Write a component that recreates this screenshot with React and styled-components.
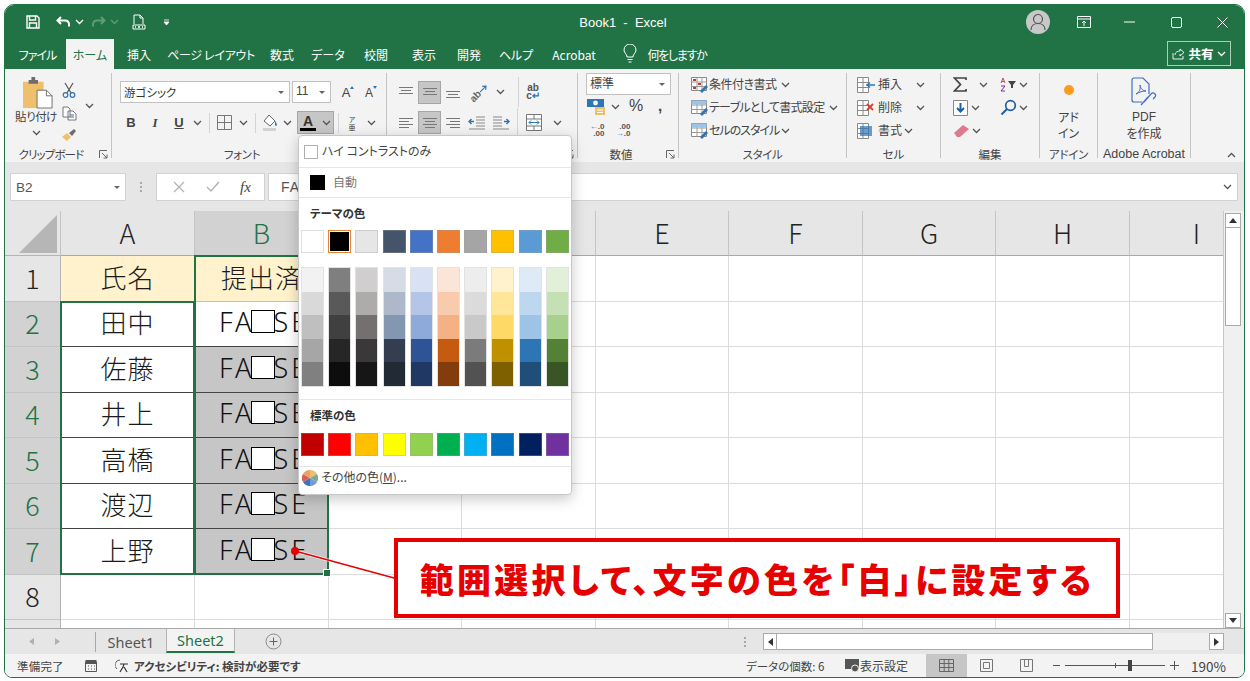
import React from 'react';
import styled, {createGlobalStyle} from 'styled-components';

const GlobalStyle = createGlobalStyle`
    html, body {
        margin: 0;
        background: #ffffff;
    }
    body {
        font-family: "Noto Sans CJK JP", "Liberation Sans", sans-serif;
        font-feature-settings: "palt";
        color: #444444;
    }
`;

const Page = styled.div`
    width: 1250px;
    height: 681px;
    padding: 4px 5px 4px 4px;
    box-sizing: border-box;
    overflow: hidden;
`;

const Window = styled.div`
    position: relative;
    height: 672px;
    display: flex;
    flex-direction: column;
    border: 1px solid #217346;
    border-radius: 10px 10px 8px 8px;
    overflow: hidden;
    background: #f3f3f3;
`;

/* title bar */
const TitleBar = styled.header`
    height: 32px;
    flex: none;
    box-sizing: border-box;
    padding-top: 2px;
    display: flex;
    align-items: center;
    background: #217346;
    color: #ffffff;
`;

const TitleSpacer = styled.div`
    width: ${p => p.$w}px;
    height: ${p => (p.$h ? `${p.$h}px` : 'auto')};
    flex: none;
`;

const TitleText = styled.div`
    width: 100px;
    flex: none;
    text-align: center;
    font-family: "Liberation Sans", sans-serif;
    font-size: 13px;
    white-space: pre;
`;

const Tool = styled.span`
    display: inline-flex;
    align-items: center;
    justify-content: center;
    flex: none;
    width: ${p => p.$w}px;
    height: ${p => (p.$h ? `${p.$h}px` : '100%')};
`;

const Avatar = styled.span`
    width: 24px;
    height: 24px;
    border-radius: 50%;
    background: #c8c8c8;
    display: inline-flex;
    align-items: center;
    justify-content: center;
`;

/* tabs */
const TabBar = styled.nav`
    height: 32px;
    flex: none;
    display: flex;
    align-items: flex-end;
    background: #217346;
`;

const TabItem = styled.span`
    flex: none;
    width: ${p => p.$w}px;
    height: 30px;
    line-height: 31px;
    text-align: center;
    font-size: 12px;
    white-space: nowrap;
    color: ${p => (p.$active ? '#217346' : '#ffffff')};
    background: ${p => (p.$active ? '#f3f3f3' : 'transparent')};
    letter-spacing: ${p => p.$ls || 0}px;
`;

const ShareButton = styled.span`
    width: 62px;
    height: 23px;
    margin: 0 13px 3px auto;
    border: 1px solid #a9cdb9;
    display: flex;
    align-items: center;
    justify-content: center;
    gap: 3px;
    color: #ffffff;
    font-size: 12.5px;
    font-weight: 700;
`;

/* ribbon */
const Ribbon = styled.section`
    height: 93px;
    flex: none;
    display: flex;
    padding-top: 4px;
    box-sizing: border-box;
    background: #f3f3f3;
`;

const Group = styled.div`
    width: ${p => p.$w}px;
    height: 85px;
    flex: none;
    box-sizing: border-box;
    border-right: 1px solid #c4c4c4;
    display: flex;
    flex-direction: column;
`;

const GroupBody = styled.div`
    height: 74px;
    flex: none;
    display: flex;
    flex-direction: ${p => p.$dir || 'column'};
    padding-left: ${p => p.$pl || 0}px;
    padding-top: ${p => p.$pt || 0}px;
    box-sizing: border-box;
`;

const Foot = styled.div`
    height: 14px;
    display: flex;
    align-items: center;
`;

const FootLabel = styled.span`
    flex: 1;
    text-align: center;
    font-size: ${p => p.$size || 11.5}px;
    line-height: 14px;
    color: #444444;
    white-space: nowrap;
    letter-spacing: ${p => p.$ls || 0}px;
    font-family: ${p => (p.$latin ? '"Liberation Sans", sans-serif' : 'inherit')};
`;

const Launcher = styled.span`
    width: 12px;
    height: 14px;
    flex: none;
    display: inline-flex;
    align-items: center;
    justify-content: center;
    margin-right: 2px;
`;

const ToolRow = styled.div`
    height: ${p => p.$h || 23}px;
    flex: none;
    display: flex;
    align-items: center;
    margin-top: ${p => p.$mt || 0}px;
    padding-left: ${p => p.$pl || 0}px;
    font-size: 12.5px;
`;

const Column = styled.div`
    width: ${p => p.$w}px;
    flex: none;
    display: flex;
    flex-direction: column;
    align-items: center;
    padding-top: ${p => p.$pt || 0}px;
    box-sizing: border-box;
`;

const Label = styled.span`
    font-size: ${p => p.$size || 12}px;
    letter-spacing: ${p => p.$ls || 0}px;
    line-height: ${p => p.$lh || 16}px;
    white-space: nowrap;
    color: #444444;
    text-align: center;
    margin-left: ${p => p.$ml || 0}px;
    margin-bottom: 2px;
    font-family: ${p => (p.$latin ? '"Liberation Sans", sans-serif' : 'inherit')};
`;

const ComboBox = styled.span`
    width: ${p => p.$w}px;
    height: ${p => p.$h || 22}px;
    flex: none;
    box-sizing: border-box;
    margin-right: ${p => p.$mr || 0}px;
    background: #ffffff;
    border: 1px solid #c2c2c2;
    display: flex;
    align-items: center;
    justify-content: space-between;
    padding: 0 5px 0 3px;
    font-size: 11.5px;
    color: #333333;
`;

const Caret = styled.span`
    width: 0;
    height: 0;
    border-left: 3px solid transparent;
    border-right: 3px solid transparent;
    border-top: 3px solid #666666;
`;

const LetterTool = styled(Tool)`
    font-family: ${p => (p.$serif ? '"Liberation Serif", serif' : '"Liberation Sans", sans-serif')};
    font-weight: 700;
    font-style: ${p => (p.$italic ? 'italic' : 'normal')};
    text-decoration: ${p => (p.$under ? 'underline' : 'none')};
    color: #444444;
    font-size: 13px;
`;

const GrowA = styled(Tool)`
    font-family: "Liberation Sans", sans-serif;
    font-size: ${p => p.$size || 13}px;
    color: #444444;
    align-items: flex-end;
    padding-bottom: 3px;
    box-sizing: border-box;
    &::after {
        content: "";
        width: 0;
        height: 0;
        margin: 0 -5px 11px 0;
        border-left: 2.5px solid transparent;
        border-right: 2.5px solid transparent;
        border-${p => (p.$down ? 'top' : 'bottom')}: 3px solid #2e75b5;
    }
`;

const Divider = styled(Tool)`
    &::after {
        content: "";
        width: 1px;
        height: ${p => p.$line || 20}px;
        background: #d4d4d4;
    }
`;

const ActiveBox = styled(Tool)`
    height: 23px;
    background: #c6c6c6;
    border: 1px solid #a6a6a6;
    box-sizing: border-box;
`;

const FontColorGlyph = styled.span`
    display: inline-block;
    border-bottom: 3px solid #000000;
    line-height: 13px;
    width: 16px;
    text-align: center;
    font-family: "Liberation Sans", sans-serif;
    font-weight: 700;
    font-size: 14px;
    color: #333333;
`;

const PhoneticGlyph = styled.span`
    font-size: 7px;
    line-height: 8px;
    text-align: center;
    color: #444444;
    display: inline-block;
`;

const OrientGlyph = styled.span`
    display: inline-flex;
    align-items: center;
    font-family: "Liberation Sans", sans-serif;
    font-size: 10px;
    font-weight: 700;
    color: #666666;
    transform: rotate(-45deg);
`;

const WrapGlyph = styled.span`
    font-family: "Liberation Sans", sans-serif;
    font-size: 10px;
    line-height: 8.5px;
    font-weight: 700;
    color: #555555;
    display: inline-block;
    text-align: center;
`;

const TinyStack = styled.span`
    font-family: "Liberation Sans", sans-serif;
    font-size: 8px;
    line-height: 7.5px;
    font-weight: 700;
    color: #555555;
    display: inline-block;
    text-align: ${p => p.$align || 'center'};
`;

const BlueText = styled.b`
    color: #2e75b5;
`;

const BigLabel = styled.span`
    font-size: 12px;
    line-height: 16px;
    text-align: center;
    color: #444444;
    font-family: ${p => (p.$latin ? '"Liberation Sans", sans-serif' : 'inherit')};
`;

const Collapse = styled.span`
    margin-left: auto;
    margin-right: 8px;
    align-self: flex-end;
    margin-bottom: 4px;
    display: inline-flex;
`;

const PasteWrap = styled.span`
    margin-left: 4px;
    display: inline-flex;
`;

/* formula bar */
const FormulaStrip = styled.div`
    height: 49px;
    flex: none;
    box-sizing: border-box;
    padding: 11px 6px 10px 5px;
    display: flex;
    align-items: stretch;
    background: #e6e6e6;
`;

const NameBox = styled.div`
    width: 116px;
    flex: none;
    box-sizing: border-box;
    background: #ffffff;
    border: 1px solid #d2d2d2;
    display: flex;
    align-items: center;
    justify-content: space-between;
    padding: 0 5px;
    font-family: "Liberation Sans", sans-serif;
    font-size: 13.5px;
    color: #555555;
`;

const GripDots = styled.span`
    width: 30px;
    flex: none;
    display: flex;
    align-items: center;
    justify-content: center;
`;

const Dots = styled.span`
    width: 2px;
    height: 10px;
    background: repeating-linear-gradient(#a8a8a8 0 2px, transparent 2px 4px);
`;

const FxBox = styled.div`
    width: 109px;
    flex: none;
    box-sizing: border-box;
    background: #ffffff;
    border: 1px solid #d2d2d2;
    display: flex;
    align-items: center;
    justify-content: space-around;
    padding: 0 3px 0 6px;
    margin-right: 3px;
`;

const FxGlyph = styled.i`
    font-family: "Liberation Serif", serif;
    font-size: 15px;
    color: #444444;
`;

const FormulaInput = styled.div`
    flex: 1;
    background: #ffffff;
    border: 1px solid #d2d2d2;
    display: flex;
    align-items: center;
    justify-content: space-between;
    padding: 0 5px 0 12px;
    font-family: "Liberation Sans", sans-serif;
    font-size: 14px;
    letter-spacing: 1px;
    color: #555555;
`;

/* sheet */
const SheetArea = styled.div`
    height: 417px;
    flex: none;
    display: flex;
    background: #ffffff;
`;

const SheetGrid = styled.div`
    position: relative;
    width: 1219px;
    height: 417px;
    flex: none;
    box-sizing: border-box;
    border-right: 1px solid #c8c8c8;
    overflow: hidden;
    display: grid;
    grid-template-columns: 56px 134px 134px 133px 134px 133px 134px 133px 134px 134px;
    grid-template-rows: 45px;
    grid-auto-rows: 45.5px;
    font-size: 26px;
`;

const Corner = styled.div`
    background: #e6e6e6;
    border-right: 1px solid #c4c4c4;
    border-bottom: 1px solid #b4b4b4;
    box-sizing: border-box;
    position: relative;
    &::after {
        content: "";
        position: absolute;
        right: 3px;
        bottom: 2px;
        width: 38px;
        height: 38px;
        background: #b6b6b6;
        clip-path: polygon(100% 0, 100% 100%, 0 100%);
    }
`;

const ColHead = styled.div`
    box-sizing: border-box;
    display: flex;
    align-items: center;
    justify-content: center;
    padding-bottom: 2px;
    background: ${p => (p.$selected ? '#d2d2d2' : '#e6e6e6')};
    color: ${p => (p.$selected ? '#217346' : '#222222')};
    border-right: 1px solid #c4c4c4;
    border-bottom: 1px solid ${p => (p.$selected ? '#217346' : '#a8a8a8')};
    font-size: 27px;
    font-weight: 300;
`;

const RowHead = styled.div`
    box-sizing: border-box;
    display: flex;
    align-items: center;
    justify-content: center;
    padding-bottom: 2px;
    background: ${p => (p.$selected ? '#d2d2d2' : '#e6e6e6')};
    color: ${p => (p.$selected ? '#217346' : '#222222')};
    border-right: 1px solid #b4b4b4;
    border-bottom: 1px solid #c4c4c4;
    font-size: 27px;
    font-weight: 300;
`;

const Cell = styled.div`
    box-sizing: border-box;
    display: flex;
    align-items: center;
    justify-content: center;
    padding-bottom: 4px;
    color: #1a1a1a;
    font-size: 26px;
    font-feature-settings: normal;
    letter-spacing: 1px;
    font-weight: 300;
    white-space: nowrap;
    overflow: hidden;
    background: ${p => p.$bg || '#ffffff'};
    border-right: 1px solid ${p => p.$line || '#dcdcdc'};
    border-bottom: 1px solid ${p => p.$line || '#dcdcdc'};
`;

const FalseText = styled.span`
    display: inline-flex;
    align-items: center;
    margin-left: 5px;
    font-family: "Noto Sans", sans-serif;
    font-size: 27px;
    font-weight: 300;
    letter-spacing: 3px;
    color: #111111;
`;

const CoverBox = styled.span`
    width: 24px;
    height: 23px;
    flex: none;
    box-sizing: border-box;
    margin-left: -3px;
    margin-right: -2px;
    background: #ffffff;
    border: 1.5px solid #000000;
`;

const Selection = styled.div`
    position: absolute;
    left: ${p => p.$left}px;
    top: ${p => p.$top}px;
    width: ${p => p.$width}px;
    height: ${p => p.$height}px;
    box-sizing: border-box;
    border: 2px solid #217346;
    pointer-events: none;
`;

const FillHandle = styled.span`
    position: absolute;
    right: -4px;
    bottom: -4px;
    width: 6px;
    height: 6px;
    background: #217346;
    border: 1px solid #ffffff;
`;

const VScroll = styled.aside`
    width: 20px;
    flex: none;
    box-sizing: border-box;
    padding: 2px 3px 0 1px;
    background: #f0f0f0;
    display: flex;
    flex-direction: column;
`;

const ScrollButton = styled.span`
    height: ${p => p.$h || 15}px;
    width: ${p => (p.$w ? `${p.$w}px` : 'auto')};
    flex: none;
    box-sizing: border-box;
    background: #ffffff;
    border: 1px solid #aaaaaa;
    display: flex;
    align-items: center;
    justify-content: center;
`;

const ScrollThumb = styled.span`
    height: 98px;
    flex: none;
    box-sizing: border-box;
    background: #ffffff;
    border: 1px solid #aaaaaa;
    border-top: none;
`;

const ScrollGap = styled.span`
    flex: 1;
`;

/* sheet tabs */
const SheetTabs = styled.div`
    height: 26px;
    flex: none;
    display: flex;
    align-items: stretch;
    background: #e6e6e6;
    border-top: 1px solid #a8a8a8;
    box-sizing: border-box;
    font-family: "Noto Sans", "Liberation Sans", sans-serif;
    font-size: 14.5px;
`;

const SheetTab = styled.span`
    flex: none;
    width: ${p => p.$w}px;
    display: flex;
    align-items: center;
    justify-content: center;
    color: ${p => (p.$active ? '#217346' : '#555555')};
    background: ${p => (p.$active ? '#f3f3f3' : 'transparent')};
    border-bottom: ${p => (p.$active ? '2px solid #217346' : 'none')};
    border-left: ${p => (p.$active ? '1px solid #b4b4b4' : 'none')};
    border-right: ${p => (p.$active ? '1px solid #b4b4b4' : 'none')};
    height: ${p => (p.$active ? '24px' : 'auto')};
    box-sizing: border-box;
`;

const VLine = styled.span`
    width: 1px;
    height: 20px;
    align-self: center;
    background: #a8a8a8;
    flex: none;
`;

const HScrollArea = styled.div`
    width: 461px;
    flex: none;
    height: 17px;
    align-self: center;
    box-sizing: border-box;
    display: flex;
    background: #f0f0f0;
`;

const HThumb = styled.span`
    width: 376px;
    flex: none;
    background: #ffffff;
    border: 1px solid #aaaaaa;
    border-left: none;
    box-sizing: border-box;
`;

const HTrack = styled.span`
    flex: 1;
`;

/* status bar */
const StatusBar = styled.footer`
    flex: 1;
    display: flex;
    align-items: center;
    background: #f3f3f3;
    font-size: 11.5px;
    color: #444444;
`;

const StatusText = styled.span`
    flex: none;
    width: ${p => p.$w}px;
    margin-left: ${p => p.$ml || 0}px;
    font-weight: ${p => (p.$bold ? 700 : 400)};
    white-space: nowrap;
    letter-spacing: ${p => p.$ls || 0}px;
    font-size: ${p => p.$size || 11.5}px;
`;

const ViewButton = styled(Tool)`
    background: ${p => (p.$active ? '#c6c6c6' : 'transparent')};
`;

const ZoomSlider = styled.span`
    width: 100px;
    height: 1px;
    flex: none;
    background: #555555;
    position: relative;
`;

const ZoomThumb = styled.span`
    position: absolute;
    left: 63px;
    top: -5px;
    width: 4px;
    height: 11px;
    background: #444444;
`;

const ZoomTick = styled.span`
    position: absolute;
    left: 50px;
    top: -2px;
    width: 1px;
    height: 5px;
    background: #555555;
`;

/* colour menu */
const ColorMenu = styled.div`
    position: absolute;
    left: 293px;
    top: 130px;
    width: 274px;
    height: 360px;
    box-sizing: border-box;
    background: #ffffff;
    border: 1px solid #c8c8c8;
    border-radius: 4px;
    box-shadow: 0 4px 14px rgba(0, 0, 0, 0.22);
    display: flex;
    flex-direction: column;
    z-index: 5;
`;

const MenuRow = styled.div`
    height: ${p => p.$h}px;
    flex: none;
    box-sizing: border-box;
    display: flex;
    align-items: center;
    padding-left: ${p => p.$pl || 0}px;
    gap: ${p => p.$gap || 0}px;
    border-bottom: ${p => (p.$line ? '1px solid #e6e6e6' : 'none')};
    font-size: 12px;
    color: ${p => p.$color || '#444444'};
`;

const MenuText = styled.span`
    margin-bottom: 2px;
`;

const CheckBox = styled.span`
    width: 12px;
    height: 12px;
    border: 1px solid #b0b0b0;
    flex: none;
`;

const AutoSwatch = styled.span`
    width: 15px;
    height: 15px;
    background: #000000;
    flex: none;
`;

const MenuHeading = styled.div`
    height: ${p => p.$h}px;
    flex: none;
    padding-left: 11px;
    padding-bottom: 2px;
    box-sizing: border-box;
    display: flex;
    align-items: center;
    font-size: 11.5px;
    font-weight: 700;
    color: #333333;
`;

const Palette = styled.div`
    display: grid;
    grid-template-columns: repeat(10, 23px);
    column-gap: 4.2px;
    padding-left: 2px;
    flex: none;
    margin-bottom: ${p => p.$mb || 0}px;
`;

const Swatch = styled.span`
    width: 23px;
    height: 23px;
    box-sizing: border-box;
    background: ${p => p.$color};
    border: 1px solid ${p => (p.$picked ? '#e8833a' : 'rgba(160, 160, 160, 0.35)')};
    box-shadow: ${p => (p.$picked ? 'inset 0 0 0 1px #ffffff' : 'none')};
`;

const ShadeColumn = styled.div`
    display: flex;
    flex-direction: column;
    width: 23px;
    border: 1px solid rgba(160, 160, 160, 0.3);
    box-sizing: border-box;
`;

const Shade = styled.span`
    height: 23.6px;
    background: ${p => p.$color};
`;

const MenuDivider = styled.div`
    height: 1px;
    flex: none;
    background: #e6e6e6;
    margin-top: ${p => p.$mt || 0}px;
`;

/* callout */
const Callout = styled.div`
    position: absolute;
    left: 389px;
    top: 533px;
    width: 726px;
    height: 80px;
    box-sizing: border-box;
    border: 4px solid #e60000;
    background: #ffffff;
    display: flex;
    align-items: center;
    justify-content: center;
    color: #e60000;
    font-size: 34px;
    font-weight: 900;
    letter-spacing: 3.3px;
    white-space: nowrap;
    z-index: 6;
`;

const Leader = styled.svg`
    position: absolute;
    left: 285px;
    top: 540px;
    z-index: 6;
`;

const Chev = ({color = '#555555', up}) => (
    <svg width="9" height="6" viewBox="0 0 9 6">
        <path d={up ? 'M1 5l3.5-3.5L8 5' : 'M1 1l3.5 3.5L8 1'} fill="none" stroke={color} strokeWidth="1.3"/>
    </svg>
);

const LauncherIcon = () => (
    <svg width="9" height="9" viewBox="0 0 9 9">
        <path d="M.5 8V.5H8M3 3l5 5M8 4.5V8H4.5" fill="none" stroke="#666666" strokeWidth="1"/>
    </svg>
);

const Lines = ({rows, color = '#777777'}) => (
    <svg width="16" height="14" viewBox="0 0 16 14">
        {rows.map(([y, x1, x2], i) => (
            <path key={i} d={`M${x1} ${y + .5}H${x2}`} stroke={color} strokeWidth="1"/>
        ))}
    </svg>
);

const SaveIcon = () => (
    <svg width="14" height="14" viewBox="0 0 14 14">
        <path d="M1 1h10l2 2v10H1zM3.5 1v4h6V1M3.5 13V8h7v5" fill="none" stroke="#ffffff" strokeWidth="1.4"/>
    </svg>
);

const UndoIcon = ({color = '#ffffff', flip}) => (
    <svg width="15" height="12" viewBox="0 0 15 12" style={flip ? {transform: 'scaleX(-1)'} : undefined}>
        <path d="M1 4.5h8a4 4 0 0 1 4 3.5v2.5M5 1L1.5 4.5 5 8" fill="none" stroke={color} strokeWidth="2"/>
    </svg>
);

const NewDocIcon = () => (
    <svg width="14" height="16" viewBox="0 0 14 16">
        <path d="M2 10V1h6l3 3v6M8 1v3h3M1 11h12v4H1z" fill="none" stroke="#ffffff" strokeWidth="1"/>
        <path d="M3 13h1M6 13h2M10 13h1" stroke="#ffffff" strokeWidth="1.4"/>
    </svg>
);

const PasteIcon = () => (
    <svg width="30" height="32" viewBox="0 0 32 34">
        <path d="M0 5h22v28H0z" fill="#efc06c"/>
        <path d="M6 3h3V0h4v3h3v4H6z" fill="#6d6d6d"/>
        <path d="M15 14h10l6 6v13H15z" fill="#ffffff" stroke="#6d6d6d" strokeWidth="1"/>
        <path d="M25 14v6h6" fill="none" stroke="#6d6d6d" strokeWidth="1"/>
    </svg>
);

const ScissorsIcon = () => (
    <svg width="14" height="16" viewBox="0 0 14 16">
        <path d="M3 1l6 10M11 1L5 11" stroke="#555555" strokeWidth="1.2"/>
        <circle cx="3.5" cy="13" r="2.3" fill="none" stroke="#2e75b5" strokeWidth="1.2"/>
        <circle cx="10.5" cy="13" r="2.3" fill="none" stroke="#2e75b5" strokeWidth="1.2"/>
    </svg>
);

const CopyIcon = () => (
    <svg width="15" height="15" viewBox="0 0 15 15">
        <path d="M1 1h5l2 2v8H1zM6 5h5l3 3v6H6z" fill="#ffffff" stroke="#777777" strokeWidth="1"/>
        <path d="M8 9h4M8 11h4" stroke="#2e75b5" strokeWidth="1"/>
    </svg>
);

const BrushIcon = () => (
    <svg width="16" height="14" viewBox="0 0 16 14">
        <path d="M1 9l5-4 4 4-4 4z" fill="#efc06c"/>
        <path d="M8 5l5-4 2 2-4 5z" fill="#6d6d6d"/>
    </svg>
);

const BordersIcon = () => (
    <svg width="15" height="15" viewBox="0 0 15 15">
        <path d="M.5.5h14v14H.5zM7.5.5v14M.5 7.5h14" fill="none" stroke="#777777" strokeWidth="1"/>
    </svg>
);

const FillIcon = () => (
    <svg width="17" height="17" viewBox="0 0 17 17">
        <path d="M7 1l6 6-5 5-6-5z" fill="#ffffff" stroke="#666666" strokeWidth="1"/>
        <path d="M13 7c1 1.5 2 3 2 4s-2 1-2 0z" fill="#2e75b5"/>
        <path d="M1 14h13v3H1z" fill="#d2d2d2"/>
    </svg>
);

const OrientArrow = () => (
    <svg width="10" height="8" viewBox="0 0 10 8">
        <path d="M0 4h8M5.500 1.500L8.500 4l-3 2.500" fill="none" stroke="#2e75b5" strokeWidth="1.100"/>
    </svg>
);

const IndentIcon = ({flip}) => (
    <svg width="17" height="14" viewBox="0 0 17 14" style={flip ? {transform: 'scaleX(-1)'} : undefined}>
        <path d="M8 1h9M8 4h9M8 7h9M8 10h9M1 13h16" stroke="#888888" strokeWidth="1"/>
        <path d="M6 5.500H1M3.500 3L1 5.500 3.500 8" fill="none" stroke="#2e75b5" strokeWidth="1.400"/>
    </svg>
);

const MergeIcon = () => (
    <svg width="16" height="17" viewBox="0 0 16 17">
        <path d="M.5.5h15v16H.5zM.5 5h15M.5 12h15M8 .5V5M8 12v4.500" fill="#ffffff" stroke="#777777" strokeWidth="1"/>
        <path d="M3 8.500h10M5 6.500l-2 2 2 2M11 6.500l2 2-2 2" fill="none" stroke="#2e75b5" strokeWidth="1"/>
    </svg>
);

const CurrencyIcon = () => (
    <svg width="21" height="18" viewBox="0 0 21 18">
        <path d="M0 1h17v8H0z" fill="#2e75b5"/>
        <circle cx="8.500" cy="5" r="2.400" fill="#ffffff"/>
        <path d="M8 9h10v8H8z" fill="#efc06c"/>
        <path d="M10 12h6M10 14.500h6" stroke="#ffffff" strokeWidth="1"/>
    </svg>
);

const TableIcon = ({variant}) => (
    <svg width="17" height="16" viewBox="0 0 17 16">
        <path d="M.5.5h15v13H.5z" fill="#ffffff" stroke="#888888" strokeWidth="1"/>
        <path d="M.5 5h15M.5 9.500h15M6 .5v13M11 .5v13" stroke="#9a9a9a" strokeWidth="1"/>
        {variant === 'cond' ? (
            <path d="M2 2h3v2H2zM7 6h3v2H7zM2 10h3v2H2z" fill="#c0392b"/>
        ) : (
            <path d="M.5.5h15v4H.5z" fill="#9dc3e6"/>
        )}
        <path d="M9 14l6-6 2 2-6 6z" fill="#2e75b5"/>
    </svg>
);

const CellsIcon = ({mark}) => (
    <svg width="18" height="16" viewBox="0 0 18 16">
        <path d="M.5.5h11v15H.5zM.5 5.500h11M.5 10.500h11M6 .5v15" fill="#ffffff" stroke="#8a8a8a" strokeWidth="1"/>
        {mark === 'insert' && <path d="M9 8h9M13 5.500L10 8l3 2.500" fill="none" stroke="#2e75b5" strokeWidth="1.300"/>}
        {mark === 'delete' && <path d="M10 4l6 6M16 4l-6 6" stroke="#d6402b" strokeWidth="1.800"/>}
        {mark === 'format' && <path d="M3 3h12v10H3z" fill="#2e75b5" opacity=".7"/>}
    </svg>
);

const SigmaIcon = () => (
    <svg width="14" height="15" viewBox="0 0 14 15">
        <path d="M13 3V1H1.500L7.500 7.500 1.500 14H13v-2" fill="none" stroke="#444444" strokeWidth="1.700"/>
    </svg>
);

const FillDownIcon = () => (
    <svg width="15" height="16" viewBox="0 0 15 16">
        <path d="M.5.5h14v15H.5z" fill="#ffffff" stroke="#888888" strokeWidth="1"/>
        <path d="M7.500 3v8M4 8l3.500 3.500L11 8" fill="none" stroke="#1f5fa8" strokeWidth="2"/>
    </svg>
);

const SearchIcon = () => (
    <svg width="17" height="17" viewBox="0 0 17 17">
        <circle cx="10.500" cy="6.500" r="4.800" fill="none" stroke="#1f5fa8" strokeWidth="1.700"/>
        <path d="M7 10l-5.500 5.500" stroke="#1f5fa8" strokeWidth="2"/>
    </svg>
);

const EraserIcon = () => (
    <svg width="17" height="14" viewBox="0 0 17 14">
        <path d="M1 9l9-8 6 4-9 8H4z" fill="#e0798d"/>
    </svg>
);

const SortIcon = () => (
    <svg width="18" height="16" viewBox="0 0 18 16">
        <path d="M2 6l2-5 2 5M3 4.500h2" fill="none" stroke="#c05050" strokeWidth="1"/>
        <path d="M2 9h4L2 14h4" fill="none" stroke="#7030a0" strokeWidth="1"/>
        <path d="M9 4h8l-3 4v3h-2V8z" fill="#444444"/>
    </svg>
);

const PdfIcon = () => (
    <svg width="26" height="30" viewBox="0 0 26 30">
        <path d="M18 17V7l-6-6H3a2 2 0 0 0-2 2v20a2 2 0 0 0 2 2h8" fill="none" stroke="#3f70c4" strokeWidth="1.200"/>
        <path d="M5 17c3-1 5-5 4-9 0 3 3 6 6 6-3 0-7 1-10 3z" fill="none" stroke="#3f70c4" strokeWidth="1"/>
        <path d="M14 27l7-8a2.500 2.500 0 0 1 4 3l-2 2M18 22l-7 8" fill="none" stroke="#3f70c4" strokeWidth="1.200" transform="translate(-1 -2)"/>
    </svg>
);

const Pie = () => (
    <svg width="16" height="16" viewBox="0 0 16 16">
        <path d="M8 8V0a8 8 0 0 1 7 4z" fill="#efc06c"/>
        <path d="M8 8l7-4a8 8 0 0 1 0 8z" fill="#7faa8f"/>
        <path d="M8 8l7 4a8 8 0 0 1-7 4z" fill="#6f9cd6"/>
        <path d="M8 8v8a8 8 0 0 1-7-4z" fill="#3f70c4"/>
        <path d="M8 8l-7 4a8 8 0 0 1 0-8z" fill="#d6604d"/>
        <path d="M8 8L1 4a8 8 0 0 1 7-4z" fill="#e8a36a"/>
    </svg>
);

const themeTop = ['#ffffff', '#000000', '#e7e6e6', '#44546a', '#4472c4', '#ed7d31', '#a5a5a5', '#ffc000', '#5b9bd5', '#70ad47'];
const themeShades = [
    ['#f2f2f2', '#d9d9d9', '#bfbfbf', '#a6a6a6', '#808080'],
    ['#7f7f7f', '#595959', '#404040', '#262626', '#0d0d0d'],
    ['#d0cece', '#aeabab', '#757070', '#3a3838', '#161616'],
    ['#d6dce5', '#adb9ca', '#8497b0', '#333f50', '#222a35'],
    ['#d9e2f3', '#b4c6e7', '#8eaadb', '#2f5496', '#1f3864'],
    ['#fbe5d6', '#f7cbac', '#f4b183', '#c55a11', '#833c0b'],
    ['#ededed', '#dbdbdb', '#c9c9c9', '#7b7b7b', '#525252'],
    ['#fff2cc', '#ffe699', '#ffd966', '#bf9000', '#7f6000'],
    ['#deebf6', '#bdd7ee', '#9dc3e6', '#2e75b5', '#1f4e79'],
    ['#e2efd9', '#c5e0b3', '#a8d08d', '#538135', '#375623'],
];
const standard = ['#c00000', '#ff0000', '#ffc000', '#ffff00', '#92d050', '#00b050', '#00b0f0', '#0070c0', '#002060', '#7030a0'];

const tabs = [
    ['ファイル', 57, -1], ['ホーム', 48, 0], ['挿入', 50, 0], ['ページ レイアウト', 94, -.3], ['数式', 48, 0],
    ['データ', 44, 0], ['校閲', 52, 0], ['表示', 44, 0], ['開発', 46, 0], ['ヘルプ', 48, 0], ['Acrobat', 68, 0],
];

const columns = ['A', 'B', 'C', 'D', 'E', 'F', 'G', 'H', 'I'];
const names = ['田中', '佐藤', '井上', '高橋', '渡辺', '上野'];

const FalseValue = () => (
    <FalseText>FA<CoverBox/>SE</FalseText>
);

const App = () => (
    <Page>
        <GlobalStyle/>
        <Window>
            <TitleBar>
                <TitleSpacer $w={19}/>
                <Tool $w={18}><SaveIcon/></Tool>
                <TitleSpacer $w={12}/>
                <Tool $w={18}><UndoIcon/></Tool>
                <Tool $w={14}><Chev color="#ffffff"/></Tool>
                <TitleSpacer $w={3}/>
                <Tool $w={18}><UndoIcon flip color="#5f9a7c"/></Tool>
                <Tool $w={14}><Chev color="#5f9a7c"/></Tool>
                <TitleSpacer $w={9}/>
                <Tool $w={18}><NewDocIcon/></Tool>
                <TitleSpacer $w={13}/>
                <Tool $w={10}>
                    <svg width="7" height="7" viewBox="0 0 7 7"><path d="M1 1h5M1 3h5l-2.500 3z" stroke="#ffffff" fill="#ffffff" strokeWidth=".8"/></svg>
                </Tool>
                <TitleSpacer $w={402}/>
                <TitleText>{'Book1  -  Excel'}</TitleText>
                <TitleSpacer $w={353}/>
                <Avatar>
                    <svg width="16" height="18" viewBox="0 0 16 18">
                        <circle cx="8" cy="6" r="4.500" fill="none" stroke="#555555" strokeWidth="1.200"/>
                        <path d="M1 17c0-4 3-6.500 7-6.500s7 2.500 7 6.500" fill="none" stroke="#555555" strokeWidth="1.200"/>
                    </svg>
                </Avatar>
                <TitleSpacer $w={27}/>
                <Tool $w={14}>
                    <svg width="14" height="12" viewBox="0 0 14 12">
                        <path d="M.5.5h13v11H.5zM.5 3h13M7 10V5M5 7l2-2 2 2" fill="none" stroke="#ffffff" strokeWidth="1"/>
                    </svg>
                </Tool>
                <TitleSpacer $w={31}/>
                <Tool $w={14}><svg width="11" height="2"><path d="M0 1h11" stroke="#ffffff"/></svg></Tool>
                <TitleSpacer $w={33}/>
                <Tool $w={14}><svg width="11" height="11"><rect x=".5" y=".5" width="10" height="10" rx="1.500" fill="none" stroke="#ffffff"/></svg></Tool>
                <TitleSpacer $w={32}/>
                <Tool $w={14}><svg width="11" height="11"><path d="M.5.5l10 10M10.500.5l-10 10" stroke="#ffffff"/></svg></Tool>
            </TitleBar>
            <TabBar>
                <TitleSpacer $w={4}/>
                {tabs.map(([name, w, ls]) => (
                    <TabItem key={name} $w={w} $ls={ls} $active={name === 'ホーム'}>{name}</TabItem>
                ))}
                <TitleSpacer $w={5}/>
                <Tool $w={34}>
                    <svg width="14" height="19" viewBox="0 0 14 19">
                        <path d="M4 13c0-3-3-4-3-7a6 6 0 0 1 12 0c0 3-3 4-3 7zM4.500 15.500h5M5.500 18h3" fill="none" stroke="#ffffff" strokeWidth="1"/>
                    </svg>
                </Tool>
                <TabItem $w={60} $ls={-1.300}>何をしますか</TabItem>
                <ShareButton>
                    <svg width="13" height="12" viewBox="0 0 13 12">
                        <path d="M1 5v6h10V8M3 7c0-3 3-4 5-4V1l4 3.500L8 8V6" fill="none" stroke="#ffffff" strokeWidth=".9"/>
                    </svg>
                    共有
                    <Chev color="#ffffff"/>
                </ShareButton>
            </TabBar>
            <Ribbon>
                <Group $w={107}>
                    <GroupBody $dir="row" $pl={8} $pt={4}>
                        <Column $w={46}>
                            <PasteWrap><PasteIcon/></PasteWrap>
                            <Label $size={11.5} $lh={14} $ls={-.5}>貼り付け</Label>
                            <Tool $w={10} $h={16}><Chev/></Tool>
                        </Column>
                        <Column $w={20} $pt={2}>
                            <Tool $w={20} $h={22}><ScissorsIcon/></Tool>
                            <Tool $w={20} $h={24}><CopyIcon/></Tool>
                            <Tool $w={20} $h={20}><BrushIcon/></Tool>
                        </Column>
                        <Column $w={20} $pt={26}><Chev/></Column>
                    </GroupBody>
                    <Foot>
                        <FootLabel $ls={-.9}>クリップボード</FootLabel>
                        <Launcher><LauncherIcon/></Launcher>
                    </Foot>
                </Group>
                <Group $w={275}>
                    <GroupBody $pl={8} $pt={8}>
                        <ToolRow $h={22}>
                            <ComboBox $w={170} $mr={2}>游ゴシック<Caret/></ComboBox>
                            <ComboBox $w={39}><Label $latin $size={12} $lh={14}>11</Label><Caret/></ComboBox>
                            <TitleSpacer $w={3}/>
                            <GrowA $w={23} $size={13}>A</GrowA>
                            <GrowA $w={23} $size={12} $down>A</GrowA>
                        </ToolRow>
                        <ToolRow $mt={8}>
                            <LetterTool $w={22}>B</LetterTool>
                            <LetterTool $w={26} $italic $serif>I</LetterTool>
                            <LetterTool $w={22} $under>U</LetterTool>
                            <Tool $w={14}><Chev/></Tool>
                            <Divider $w={10}/>
                            <Tool $w={20}><BordersIcon/></Tool>
                            <Tool $w={18}><Chev/></Tool>
                            <Divider $w={6}/>
                            <Tool $w={24}><FillIcon/></Tool>
                            <Tool $w={10}><Chev/></Tool>
                            <TitleSpacer $w={5}/>
                            <ActiveBox $w={37}>
                                <FontColorGlyph>A</FontColorGlyph>
                                <TitleSpacer $w={6}/>
                                <Chev/>
                            </ActiveBox>
                            <Divider $w={8}/>
                            <Tool $w={20}><PhoneticGlyph>ア<br/>亜</PhoneticGlyph></Tool>
                            <Tool $w={18}><Chev/></Tool>
                        </ToolRow>
                    </GroupBody>
                    <Foot>
                        <FootLabel $ls={-.3}>フォント</FootLabel>
                        <Launcher/>
                    </Foot>
                </Group>
                <Group $w={191}>
                    <GroupBody $pl={7} $pt={8}>
                        <ToolRow $h={22}>
                            <Tool $w={24}><Lines rows={[[2, 1, 15], [5, 3, 13], [8, 1, 15]]}/></Tool>
                            <ActiveBox $w={23}><Lines rows={[[3, 1, 15], [6, 3, 13], [9, 1, 15]]}/></ActiveBox>
                            <Tool $w={23}><Lines rows={[[6, 1, 15], [9, 3, 13], [12, 1, 15]]}/></Tool>
                            <Tool $w={30}><OrientGlyph>ab<OrientArrow/></OrientGlyph></Tool>
                            <Tool $w={12}><Chev/></Tool>
                            <TitleSpacer $w={6}/>
                            <Divider $w={12} $line={30}/>
                            <Tool $w={18}><WrapGlyph>ab<br/>c<BlueText>↵</BlueText></WrapGlyph></Tool>
                        </ToolRow>
                        <ToolRow $mt={8}>
                            <Tool $w={24}><Lines rows={[[2, 1, 15], [5, 1, 11], [8, 1, 15], [11, 1, 11]]}/></Tool>
                            <ActiveBox $w={23}><Lines rows={[[2, 1, 15], [5, 3, 13], [8, 1, 15], [11, 3, 13]]}/></ActiveBox>
                            <Tool $w={23}><Lines rows={[[2, 1, 15], [5, 5, 15], [8, 1, 15], [11, 5, 15]]}/></Tool>
                            <Tool $w={25}><IndentIcon/></Tool>
                            <Tool $w={25}><IndentIcon flip/></Tool>
                            <Divider $w={6} $line={30}/>
                            <Tool $w={28}><MergeIcon/></Tool>
                            <Tool $w={18}><Chev/></Tool>
                        </ToolRow>
                    </GroupBody>
                    <Foot>
                        <FootLabel>配置</FootLabel>
                        <Launcher><LauncherIcon/></Launcher>
                    </Foot>
                </Group>
                <Group $w={101}>
                    <GroupBody $pl={8}>
                        <ToolRow $h={22}>
                            <ComboBox $w={85}><Label $size={12} $lh={14}>標準</Label><Caret/></ComboBox>
                        </ToolRow>
                        <ToolRow $h={24}>
                            <Tool $w={22}><CurrencyIcon/></Tool>
                            <Tool $w={14}><Chev/></Tool>
                            <Tool $w={28}><Label $latin $size={16}>%</Label></Tool>
                            <Tool $w={20}><Label $latin $size={15}><b>,</b></Label></Tool>
                        </ToolRow>
                        <ToolRow $h={22}>
                            <Tool $w={22}><TinyStack $align="right"><BlueText>←</BlueText>.0<br/>.00</TinyStack></Tool>
                            <TitleSpacer $w={4}/>
                            <Tool $w={22}><TinyStack $align="right">.00<br/><BlueText>→</BlueText>.0</TinyStack></Tool>
                        </ToolRow>
                    </GroupBody>
                    <Foot>
                        <FootLabel>数値</FootLabel>
                        <Launcher><LauncherIcon/></Launcher>
                    </Foot>
                </Group>
                <Group $w={168}>
                    <GroupBody $pl={12}>
                        <ToolRow>
                            <TableIcon variant="cond"/>
                            <Label $ml={1} $ls={-.5}>条件付き書式</Label>
                            <Tool $w={18}><Chev/></Tool>
                        </ToolRow>
                        <ToolRow>
                            <TableIcon/>
                            <Label $ml={1} $ls={-.7}>テーブルとして書式設定</Label>
                            <Tool $w={18}><Chev/></Tool>
                        </ToolRow>
                        <ToolRow>
                            <TableIcon/>
                            <Label $ml={1} $ls={-1}>セルのスタイル</Label>
                            <Tool $w={12}><Chev/></Tool>
                        </ToolRow>
                    </GroupBody>
                    <Foot><FootLabel $ls={-.3}>スタイル</FootLabel></Foot>
                </Group>
                <Group $w={94}>
                    <GroupBody $pl={10}>
                        <ToolRow>
                            <CellsIcon mark="insert"/>
                            <Label $ml={3}>挿入</Label>
                            <TitleSpacer $w={14}/>
                            <Chev/>
                        </ToolRow>
                        <ToolRow>
                            <CellsIcon mark="delete"/>
                            <Label $ml={3}>削除</Label>
                            <TitleSpacer $w={14}/>
                            <Chev/>
                        </ToolRow>
                        <ToolRow>
                            <CellsIcon mark="format"/>
                            <Label $ml={3}>書式</Label>
                            <TitleSpacer $w={2}/>
                            <Chev/>
                        </ToolRow>
                    </GroupBody>
                    <Foot><FootLabel>セル</FootLabel></Foot>
                </Group>
                <Group $w={99}>
                    <GroupBody $pl={11}>
                        <ToolRow>
                            <Tool $w={16}><SigmaIcon/></Tool>
                            <Tool $w={30}><Chev/></Tool>
                            <Tool $w={20}><SortIcon/></Tool>
                            <Tool $w={10}><Chev/></Tool>
                        </ToolRow>
                        <ToolRow>
                            <Tool $w={16}><FillDownIcon/></Tool>
                            <Tool $w={14}><Chev/></Tool>
                            <TitleSpacer $w={16}/>
                            <Tool $w={20}><SearchIcon/></Tool>
                            <Tool $w={10}><Chev/></Tool>
                        </ToolRow>
                        <ToolRow>
                            <Tool $w={18}><EraserIcon/></Tool>
                            <Tool $w={12}><Chev/></Tool>
                        </ToolRow>
                    </GroupBody>
                    <Foot><FootLabel>編集</FootLabel></Foot>
                </Group>
                <Group $w={58}>
                    <GroupBody $pt={10}>
                        <Column $w={57}>
                            <svg width="14" height="14" viewBox="0 0 14 14">
                                <circle cx="7" cy="7" r="5" fill="#ff9a1f"/>
                            </svg>
                            <TitleSpacer $w={1} $h={12}/>
                            <BigLabel>アド<br/>イン</BigLabel>
                        </Column>
                    </GroupBody>
                    <Foot><FootLabel $ls={-.3}>アドイン</FootLabel></Foot>
                </Group>
                <Group $w={93}>
                    <GroupBody $pt={4}>
                        <Column $w={92}>
                            <PdfIcon/>
                            <TitleSpacer $w={1} $h={2}/>
                            <BigLabel $latin>PDF</BigLabel>
                            <BigLabel>を作成</BigLabel>
                        </Column>
                    </GroupBody>
                    <Foot><FootLabel $latin $size={12.5}>Adobe Acrobat</FootLabel></Foot>
                </Group>
                <Collapse><Chev up/></Collapse>
            </Ribbon>
            <FormulaStrip>
                <NameBox>B2<Caret/></NameBox>
                <GripDots><Dots/></GripDots>
                <FxBox>
                    <svg width="12" height="12"><path d="M1 1l10 10M11 1L1 11" stroke="#b4b4b4" strokeWidth="1.300"/></svg>
                    <svg width="14" height="12"><path d="M1 6l4 4 8-9" fill="none" stroke="#b4b4b4" strokeWidth="1.500"/></svg>
                    <FxGlyph>fx</FxGlyph>
                </FxBox>
                <FormulaInput>FALSE<Chev/></FormulaInput>
            </FormulaStrip>
            <SheetArea>
                <SheetGrid>
                    <Corner/>
                    {columns.map(c => (
                        <ColHead key={c} $selected={c === 'B'}>{c}</ColHead>
                    ))}
                    <RowHead>1</RowHead>
                    <Cell $bg="#fff2cc" $line="#c9c0a0">氏名</Cell>
                    <Cell $bg="#fff2cc" $line="#c9c0a0">提出済</Cell>
                    {Array.from({length: 7}).map((_, i) => <Cell key={i}/>)}
                    {names.map((name, r) => (
                        <React.Fragment key={name}>
                            <RowHead $selected>{r + 2}</RowHead>
                            <Cell $line="#444444">{name}</Cell>
                            <Cell $bg={r === 0 ? '#ffffff' : '#c6c6c6'} $line="#444444"><FalseValue/></Cell>
                            {Array.from({length: 7}).map((_, i) => <Cell key={i}/>)}
                        </React.Fragment>
                    ))}
                    {[8, 9].map(n => (
                        <React.Fragment key={n}>
                            <RowHead>{n === 8 ? n : ''}</RowHead>
                            {columns.map(c => <Cell key={c}/>)}
                        </React.Fragment>
                    ))}
                    <Selection $left={55} $top={90} $width={135} $height={274}/>
                    <Selection $left={189} $top={44} $width={135} $height={320}>
                        <FillHandle/>
                    </Selection>
                </SheetGrid>
                <VScroll>
                    <ScrollButton>
                        <svg width="8" height="5"><path d="M4 0l4 5H0z" fill="#333333"/></svg>
                    </ScrollButton>
                    <ScrollThumb/>
                    <ScrollGap/>
                    <ScrollButton>
                        <svg width="8" height="5"><path d="M4 5L8 0H0z" fill="#333333"/></svg>
                    </ScrollButton>
                </VScroll>
            </SheetArea>
            <SheetTabs>
                <TitleSpacer $w={20}/>
                <Tool $w={12}><svg width="5" height="7"><path d="M5 0v7L0 3.500z" fill="#b0b0b0"/></svg></Tool>
                <TitleSpacer $w={14}/>
                <Tool $w={12}><svg width="5" height="7"><path d="M0 0v7l5-3.500z" fill="#b0b0b0"/></svg></Tool>
                <TitleSpacer $w={32}/>
                <VLine/>
                <SheetTab $w={70}>Sheet1</SheetTab>
                <SheetTab $w={69} $active>Sheet2</SheetTab>
                <TitleSpacer $w={27}/>
                <Tool $w={22}>
                    <svg width="17" height="17" viewBox="0 0 17 17">
                        <circle cx="8.500" cy="8.500" r="7.500" fill="none" stroke="#8a8a8a"/>
                        <path d="M8.500 4.500v8M4.500 8.500h8" stroke="#666666"/>
                    </svg>
                </Tool>
                <TitleSpacer $w={446}/>
                <GripDots><Dots/></GripDots>
                <TitleSpacer $w={3}/>
                <HScrollArea>
                    <ScrollButton $w={14} $h={17}>
                        <svg width="5" height="8"><path d="M5 0v8L0 4z" fill="#333333"/></svg>
                    </ScrollButton>
                    <HThumb/>
                    <HTrack/>
                    <ScrollButton $w={15} $h={17}>
                        <svg width="5" height="8"><path d="M0 0v8l5-4z" fill="#333333"/></svg>
                    </ScrollButton>
                </HScrollArea>
            </SheetTabs>
            <StatusBar>
                <StatusText $w={67} $ml={12} $ls={.2}>準備完了</StatusText>
                <Tool $w={14}>
                    <svg width="12" height="12" viewBox="0 0 12 12">
                        <path d="M.5 2h11v9.500H.5z" fill="none" stroke="#555555"/>
                        <path d="M.5 0h11v4H.5z" fill="#555555"/>
                        <path d="M3 6h1M6 6h1M9 6h1M3 9h1M6 9h1M9 9h1" stroke="#555555"/>
                    </svg>
                </Tool>
                <TitleSpacer $w={16}/>
                <Tool $w={16}>
                    <svg width="15" height="14" viewBox="0 0 15 14">
                        <path d="M5 1a5 5 0 0 0-3 9" fill="none" stroke="#666666"/>
                        <path d="M5 5h8M9 5l-1 3-3 5M9 8l3 5" fill="none" stroke="#333333" strokeWidth="1.200"/>
                    </svg>
                </Tool>
                <StatusText $w={612} $ml={4} $bold $size={11.5}>アクセシビリティ: 検討が必要です</StatusText>
                <StatusText $w={98}>データの個数: 6</StatusText>
                <Tool $w={16}>
                    <svg width="15" height="14" viewBox="0 0 15 14">
                        <path d="M0 0h14v10H0z" fill="#555555"/>
                        <circle cx="10" cy="9.500" r="3.500" fill="#555555" stroke="#f3f3f3"/>
                    </svg>
                </Tool>
                <StatusText $w={66} $size={12}>表示設定</StatusText>
                <ViewButton $w={41} $active>
                    <svg width="15" height="13" viewBox="0 0 15 13"><path d="M.5.500h14v12H.5zM5.200.500v12M9.800.500v12M.5 4.500h14M.5 8.500h14" fill="none" stroke="#666666"/></svg>
                </ViewButton>
                <ViewButton $w={38}>
                    <svg width="13" height="13" viewBox="0 0 13 13"><path d="M.5.500h12v12H.5zM3.500 3.500h6v6h-6z" fill="none" stroke="#777777"/></svg>
                </ViewButton>
                <ViewButton $w={42}>
                    <svg width="13" height="13" viewBox="0 0 13 13"><path d="M.5.500h12v12H.5zM4.500.500v7h4v-7" fill="none" stroke="#777777"/></svg>
                </ViewButton>
                <Tool $w={18}><svg width="7" height="1"><path d="M0 .5h7" stroke="#555555"/></svg></Tool>
                <ZoomSlider>
                    <ZoomTick/>
                    <ZoomThumb/>
                </ZoomSlider>
                <Tool $w={18}><svg width="9" height="9"><path d="M0 4.500h9M4.500 0v9" stroke="#555555"/></svg></Tool>
                <TitleSpacer $w={8}/>
                <StatusText $w={40} $size={13.5}>190%</StatusText>
            </StatusBar>

            <ColorMenu>
                <MenuRow $h={32} $pl={5} $gap={4} $line>
                    <CheckBox/>
                    <MenuText>ハイ コントラストのみ</MenuText>
                </MenuRow>
                <MenuRow $h={30} $pl={11} $gap={8} $line $color="#777777">
                    <AutoSwatch/>
                    <MenuText>自動</MenuText>
                </MenuRow>
                <MenuHeading $h={32}>テーマの色</MenuHeading>
                <Palette $mb={14}>
                    {themeTop.map((c, i) => <Swatch key={c} $color={c} $picked={i === 1}/>)}
                </Palette>
                <Palette>
                    {themeShades.map((col, i) => (
                        <ShadeColumn key={i}>
                            {col.map(c => <Shade key={c} $color={c}/>)}
                        </ShadeColumn>
                    ))}
                </Palette>
                <MenuDivider $mt={12}/>
                <MenuHeading $h={33}>標準の色</MenuHeading>
                <Palette>
                    {standard.map(c => <Swatch key={c} $color={c}/>)}
                </Palette>
                <MenuDivider $mt={10}/>
                <MenuRow $h={22} $pl={3} $gap={3}>
                    <Pie/>
                    <MenuText>その他の色(<u>M</u>)...</MenuText>
                </MenuRow>
            </ColorMenu>

            <Leader width="110" height="50" viewBox="0 0 110 50">
                <path d="M5 6l99 27" stroke="#ffffff" strokeWidth="3" opacity=".7"/>
                <path d="M5 6l99 27" stroke="#e60000" strokeWidth="1.500"/>
                <circle cx="5" cy="6" r="4" fill="#e60000"/>
            </Leader>
            <Callout>範囲選択して、文字の色を「白」に設定する</Callout>
        </Window>
    </Page>
);

export default App;
